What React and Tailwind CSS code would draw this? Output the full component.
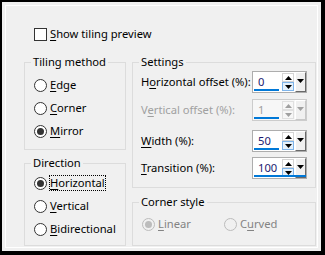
import React from "react";

const Acc = ({ children }) => (
  <span className="underline underline-offset-[2px] decoration-[1px]">{children}</span>
);

const Radio = ({ checked, disabled }) => (
  <span
    className={`flex h-[13px] w-[13px] shrink-0 items-center justify-center rounded-full border ${
      disabled ? "border-[#bcbcbc] bg-[#f0f0f0]" : "border-[#333333] bg-white"
    }`}
  >
    {checked && (
      <span
        className={`h-[7px] w-[7px] rounded-full ${disabled ? "bg-[#bcbcbc]" : "bg-[#333333]"}`}
      />
    )}
  </span>
);

const RadioRow = ({ checked, disabled, focused, children }) => (
  <div className="flex h-4 items-center gap-[3px] pl-[9px]">
    <Radio checked={checked} disabled={disabled} />
    <span
      className={`whitespace-nowrap leading-[16px] ${disabled ? "text-[#838383]" : ""} ${
        focused ? "outline-1 outline-dotted outline-black -outline-offset-1 px-[1px] -ml-[1px]" : ""
      }`}
    >
      {children}
    </span>
  </div>
);

const Group = ({ title, className, children }) => (
  <fieldset className={`border border-[#dcdcdc] ${className || ""}`}>
    <legend className="ml-[6px] px-[2px] leading-[16px]">{title}</legend>
    {children}
  </fieldset>
);

const Tri = ({ up, color }) => (
  <svg width="7" height="4" viewBox="0 0 7 4">
    <polygon points={up ? "0,4 3.5,0 7,4" : "0,0 7,0 3.5,4"} fill={color} />
  </svg>
);

// numeric edit with spin arrows and a little drop button
const Spin = ({ value, disabled, full }) => {
  const arrow = disabled ? "#a0a0a0" : "#000000";
  return (
    <div
      className={`relative flex h-[22px] w-[55px] shrink-0 border ${
        disabled ? "border-[#cccccc] bg-[#f7f7f7]" : "border-[#adadad] bg-white"
      }`}
    >
      <div
        className={`w-[30px] pl-[5px] leading-[20px] ${
          disabled ? "text-[#a0a0a0]" : "text-[#1a1a70]"
        }`}
      >
        {value}
      </div>
      <div className="flex w-[12px] flex-col justify-center py-[1px]">
        <div
          className={`flex h-[9px] items-center justify-center border ${
            disabled ? "border-[#e0e0e0]" : "border-[#d4d4d4]"
          }`}
        >
          <Tri up color={arrow} />
        </div>
        <div
          className={`flex h-[9px] items-center justify-center border ${
            disabled ? "border-[#e0e0e0]" : "border-[#7eb4ea] bg-[#e5f1fb]"
          }`}
        >
          <Tri color={arrow} />
        </div>
      </div>
      <div
        className={`ml-[1px] flex w-[11px] justify-center border-l border-t border-r border-b bg-[#f0f0f0] pt-[6px] ${
          disabled
            ? "border-l-white border-t-white border-r-[#c8c8c8] border-b-[#c8c8c8]"
            : "border-l-white border-t-white border-r-[#696969] border-b-[#696969]"
        }`}
      >
        <Tri color={arrow} />
      </div>
      <div
        className={`absolute bottom-[1px] left-[1px] h-[2px] bg-[#0078d7] ${
          full ? "w-[52px]" : "w-[25px]"
        }`}
      />
    </div>
  );
};

const SettingRow = ({ label, disabled, className, children }) => (
  <div className={`flex h-[22px] items-center pl-[8px] ${className || ""}`}>
    <span
      className={`w-[111px] shrink-0 whitespace-nowrap leading-[16px] ${
        disabled ? "text-[#a0a0a0]" : ""
      }`}
    >
      {label}
    </span>
    {children}
  </div>
);

export default function App() {
  return (
    <div className="h-[255px] w-[325px] border-b-4 border-l-2 border-r-4 border-t-2 border-black bg-[#f0f0f0] p-[3px] font-['Noto_Sans',sans-serif] text-[11.2px] text-black">
      <div className="h-full border border-white pl-[18px] pt-[20px]">
        <div className="ml-[10px] flex h-4 items-center gap-[3px]">
          <span className="h-[13px] w-[13px] border border-[#333333] bg-white" />
          <span className="leading-[16px]">
            <Acc>S</Acc>how tiling preview
          </span>
        </div>

        <div className="mt-[12px] flex gap-[6px]">
          {/* left column */}
          <div className="flex w-[102px] flex-col gap-[5px]">
            <Group title="Tiling method" className="pb-[10px]">
              <div className="mt-[7px] flex flex-col gap-[7px]">
                <RadioRow>
                  <Acc>E</Acc>dge
                </RadioRow>
                <RadioRow>
                  <Acc>C</Acc>orner
                </RadioRow>
                <RadioRow checked>
                  <Acc>M</Acc>irror
                </RadioRow>
              </div>
            </Group>
            <Group title="Direction" className="pb-[8px]">
              <div className="mt-[4px] flex flex-col gap-[7px]">
                <RadioRow checked focused>
                  <Acc>H</Acc>orizontal
                </RadioRow>
                <RadioRow>
                  <Acc>V</Acc>ertical
                </RadioRow>
                <RadioRow>
                  <Acc>B</Acc>idirectional
                </RadioRow>
              </div>
            </Group>
          </div>

          {/* right column */}
          <div className="flex w-[184px] flex-col gap-[6px]">
            <Group title="Settings" className="pb-[8px]">
              <SettingRow label={<>H<Acc>o</Acc>rizontal offset (%):</>} className="mt-[1px]">
                <Spin value="0" />
              </SettingRow>
              <SettingRow
                label={<>V<Acc>e</Acc>rtical offset (%):</>}
                disabled
                className="mt-[6px]"
              >
                <Spin value="1" disabled />
              </SettingRow>
              <SettingRow label={<><Acc>W</Acc>idth (%):</>} className="mt-[9px]">
                <Spin value="50" />
              </SettingRow>
              <SettingRow label={<><Acc>T</Acc>ransition (%):</>} className="mt-[5px]">
                <Spin value="100" full />
              </SettingRow>
            </Group>
            <Group title="Corner style" className="pb-[13px]">
              <div className="mt-[6px] flex h-4 items-center">
                <div className="w-[82px]">
                  <RadioRow checked disabled>
                    <Acc>L</Acc>inear
                  </RadioRow>
                </div>
                <RadioRow disabled>
                  C<Acc>u</Acc>rved
                </RadioRow>
              </div>
            </Group>
          </div>
        </div>
      </div>
    </div>
  );
}
